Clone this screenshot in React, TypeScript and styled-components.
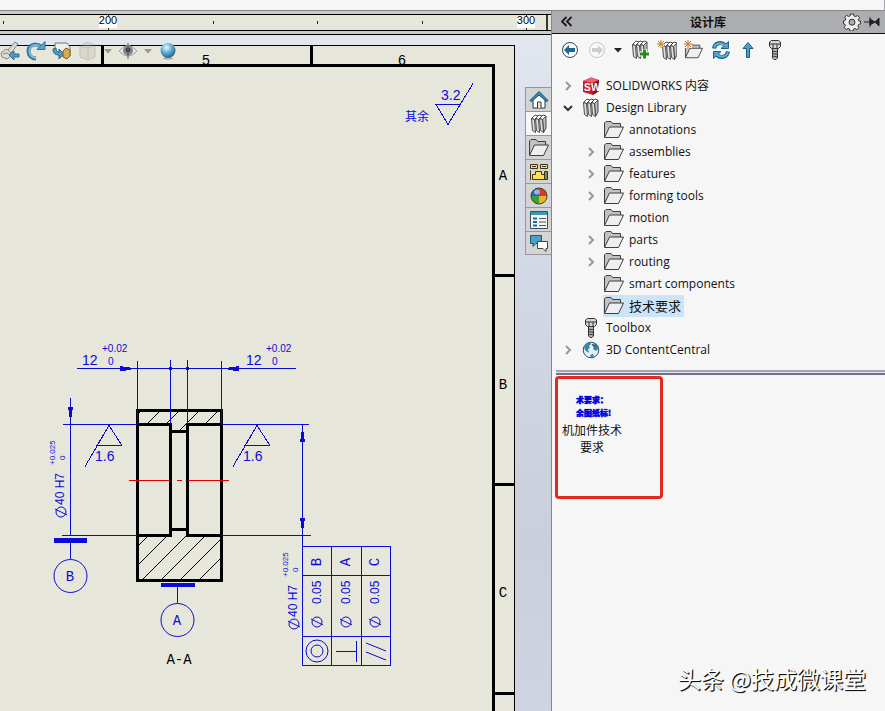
import React from "react";
import styled, { createGlobalStyle } from "styled-components";

const GlobalStyle = createGlobalStyle`
  * { box-sizing: border-box; }
  body {
    margin: 0;
    background: #f6f6f6;
    color: #111;
    font: 12px/22px "Open Sans", "Noto Sans CJK SC", sans-serif;
  }
  button { font: inherit; color: inherit; padding: 0; border: 0; background: none; }
  ul { list-style: none; margin: 0; padding: 0; }
  svg { display: block; flex: none; }
`;

const Window = styled.div`
  position: relative;
  display: flex;
  flex-direction: column;
  min-height: 100vh;
`;
const TopStrip = styled.header`
  height: 10px;
  border-right: 1px solid #a5a5a9;
  background: #f6f6f6;
`;
const Workspace = styled.main`
  flex: 1;
  display: flex;
  border-top: 1px solid #85868a;
`;
const DocumentPane = styled.section`
  flex: 1;
  min-width: 0;
  display: flex;
  flex-direction: column;
  border-right: 1px solid #85868f;
`;
const RulerBar = styled.div`
  background: #c8cacb;
  padding: 3px 0;
  border-bottom: 1px solid #000;
`;
const RulerTrack = styled.div`
  height: 17px;
  overflow: hidden;
  background: #e6e6da;
  border-top: 1px solid #000;
  border-bottom: 1px solid #000;
`;
const Canvas = styled.div`
  position: relative;
  flex: 1;
  display: flex;
  justify-content: space-between;
  background: linear-gradient(#e2e6ef, #d3d9e5 30%, #cbcfdb 75%, #d0d4e2);
`;
const Sheet = styled.div`
  flex: 1;
  min-width: 0;
  overflow: hidden;
  margin: 10px 9px 0 0;
`;
const ViewTools = styled.div`
  position: absolute;
  top: 4px;
  left: -1px;
  display: flex;
  align-items: center;
  gap: 4px;
`;
const ViewTool = styled.button<{ $dim?: boolean }>`
  width: 22px;
  height: 24px;
  display: grid;
  place-items: center;
  opacity: ${(p) => (p.$dim ? 0.3 : 1)};
`;
const ViewMenu = styled(ViewTool)`
  width: 10px;
`;
const TabRail = styled.nav`
  width: 26px;
  padding-top: 52px;
`;
const RailTab = styled.button<{ $active?: boolean }>`
  width: 26px;
  height: 24px;
  display: grid;
  place-items: center;
  border: 1px solid #96979b;
  border-width: 1px 0 0 1px;
  background: ${(p) => (p.$active ? "#f6f6f6" : "#d3d4d4")};
  &:last-child { border-bottom-width: 1px; }
`;
const LibraryPane = styled.aside`
  width: 333px;
  display: flex;
  flex-direction: column;
  background: #f6f6f6;
`;
const PaneHeader = styled.div`
  height: 23px;
  display: flex;
  align-items: center;
  padding: 0 4px 0 6px;
  gap: 2px;
  background: #abadb0;
  border-bottom: 1px solid #101018;
`;
const PaneTitle = styled.h1`
  flex: 1;
  margin: 0;
  padding-right: 3px;
  text-align: center;
  font: bold 12px/20px "Noto Sans CJK SC", sans-serif;
`;
const PaneTools = styled.div`
  height: 32px;
  display: flex;
  align-items: center;
  gap: 4px;
  padding-left: 6px;
`;
const PaneTool = styled.button<{ $narrow?: boolean }>`
  width: ${(p) => (p.$narrow ? 12 : 23)}px;
  height: 24px;
  display: grid;
  place-items: center;
`;
const HeaderTool = styled.button`
  width: 18px;
  height: 20px;
  display: grid;
  place-items: center;
`;
const Tree = styled.ul`
  padding: 9px 0 9px 8px;
`;
const Branch = styled.ul`
  padding-left: 23px;
`;
const TreeRow = styled.div`
  display: flex;
  align-items: center;
  height: 22px;
`;
const Toggle = styled.span`
  width: 20px;
  display: flex;
  padding-left: 3px;
`;
const Node = styled.button<{ $selected?: boolean }>`
  height: 22px;
  display: flex;
  align-items: center;
  gap: 5px;
  padding: 0 3px 0 1px;
  white-space: nowrap;
  font-size: ${(p) => (p.$selected ? 13 : 12)}px;
  background: ${(p) => (p.$selected ? "#cce4f8" : "transparent")};
`;
const Splitter = styled.hr`
  width: 100%;
  height: 5px;
  margin: 0 0 0 4px;
  border: 0;
  border-top: 2px solid #a2a3b5;
  border-bottom: 2px solid #72738a;
  background: #e3e4ec;
`;
const Results = styled.div`
  flex: 1;
  padding: 1px 3px;
`;
const ResultCard = styled.button`
  width: 108px;
  height: 123px;
  display: flex;
  flex-direction: column;
  padding: 14px 36px 0 2px;
  border: 3px solid #e22a20;
  border-radius: 4px;
  text-align: center;
`;
const Preview = styled.span`
  padding-left: 16px;
  color: #0000e0;
  text-align: left;
  white-space: nowrap;
  font: 900 8px/13px "Noto Sans CJK SC", sans-serif;
  text-shadow: 0 0 1px #0000e0;
`;
const ResultName = styled.span`
  padding-top: 2px;
  font: 12px/17px "Noto Sans CJK SC", sans-serif;
`;
const Watermark = styled.div`
  position: absolute;
  right: 19px;
  bottom: 17px;
  color: #fff;
  font: 23px/32px "Noto Sans CJK SC", sans-serif;
  text-shadow: 1px 1px 0 #111, 1px 1px 1px #333;
`;

const Svg = ({ w = 20, h = 20, children }: { w?: number; h?: number; children: React.ReactNode }) => (
  <svg width={w} height={h} viewBox={`0 0 ${w} ${h}`} fill="none" aria-hidden="true">{children}</svg>
);

const Caret = ({ color = "#222" }) => (
  <Svg w={8} h={5}><path d="M0 0h8L4 4.500z" fill={color} /></Svg>
);
const booksPath = (
  <g stroke="#3a3a3a" strokeWidth=".9" strokeLinejoin="round">
    <path d="M13.500 5.500L17 2v12l-2.500 4.500z" fill="#bdbdbd" />
    {[0, 4, 8].map((x) => (
      <g key={x}>
        <path d={`M${x + 2.500} 4.500L${x + 6} 1l3 1-3.500 3.500z`} fill="#fff" />
        <path d={`M${x + 2.500} 4.500l3 1 1 13-3-2z`} fill="#dedede" />
      </g>
    ))}
  </g>
);
const Books = () => <Svg>{booksPath}</Svg>;
const star = <path d="M4 0v8M0 4h8M1 1l6 6M7 1L1 7" stroke="#c87722" />;
const BooksAdd = () => (
  <Svg>{booksPath}<path d="M14.500 9v10M9.500 14h10" stroke="#fff" strokeWidth="5" /><path d="M14.500 9.500v9M10 14h9" stroke="#258b18" strokeWidth="3" /></Svg>
);
const BooksNew = () => <Svg><g transform="translate(3 1)">{booksPath}</g><rect width="7" height="7" fill="#f6f6f6" />{star}</Svg>;
const folderPath = (
  <g stroke="#3f3f42" strokeLinejoin="round">
    <path d="M.500 17V3L2 1.500h5L8.500 3.500h8V7" fill="#c2c2c5" />
    <path d="M.500 17.500L5.500 7h14l-5 10.500z" fill="#efeff1" />
  </g>
);
const Folder = () => <Svg>{folderPath}</Svg>;
const FolderNew = () => <Svg><g transform="translate(1 2) scale(.9)">{folderPath}</g><rect width="8" height="8" fill="#f6f6f6" />{star}</Svg>;
const Bolt = () => (
  <Svg>
    <g stroke="#333" fill="#b8b8ba">
      <path d="M7.500 8h5v10l-1.500 1.500H9L7.500 18z" />
      <path d="M4.500 2l2-1.500h7l2 1.500v4.500l-2 2h-7l-2-2z" fill="#d5d5d7" />
      <path d="M4.500 4h11M8 4v4M12 4v4M7.500 11l5 1M7.500 13.500l5 1M7.500 16l5 1" />
    </g>
  </Svg>
);
const Back = ({ off = false }) => (
  <Svg w={18} h={18}>
    <g transform={off ? "rotate(180 9 9)" : undefined}>
      <circle cx="9" cy="9" r="7.500" fill="#fafafa" stroke={off ? "#c6c6c8" : "#39475b"} />
      <path d="M3 9l5-5v3h6v4H8v3z" fill={off ? "#ccc" : "#176894"} />
    </g>
  </Svg>
);
const refreshHalf = (
  <>
    <path d="M3 8.500C4 2 11 2 14 5" stroke="#1d6488" strokeWidth="4" />
    <path d="M17.500 1.500v7h-7.500z" fill="#4ba2c9" stroke="#1d6488" strokeLinejoin="round" />
    <path d="M3 7.500C5 2.500 11 2.500 14.500 5.500" stroke="#63b2d6" strokeWidth="2" />
  </>
);
const Refresh = () => <Svg>{refreshHalf}<g transform="rotate(180 10 10)">{refreshHalf}</g></Svg>;
const UpArrow = () => <Svg><path d="M10 2.500l5 6h-3.500v9h-3v-9H5z" fill="#4ba2c9" stroke="#175b80" /></Svg>;
const Gear = () => (
  <Svg w={18} h={18}>
    <path d="M7.500 1h3l.5 2 1.500.7L14.500 2.500l2 2.200-1.300 1.800.6 1.500 1.700.2v2.600l-2 .7-.6 1.400 1.100 1.800-2.100 2-1.900-1.200-1.500.6-.5 1.900h-3L6.500 16 5 15.400l-1.800 1.200-2-2.200 1.200-1.800L2 11.200l-1.500-.4V8l1.700-.6.6-1.500-1.200-1.700 2-1.900 1.800 1.100L7 3z" fill="#eee" stroke="#333" />
    <circle cx="9" cy="9.200" r="3" fill="#abadb0" stroke="#333" />
  </Svg>
);
const Pin = () => (
  <Svg w={16} h={14}><path d="M0 7h6" stroke="#222" /><path d="M6 2v10M6 4l5 3 4-4v8l-4-4-5 3z" fill="#222" stroke="#222" /></Svg>
);
const Collapse = () => <Svg w={12} h={12}><path d="M5.500 1L1 5.500 5.500 10M10.500 1L6 5.500l4.500 4.500" stroke="#1b1b1b" strokeWidth="1.800" /></Svg>;
const SolidWorks = () => (
  <Svg>
    <path d="M2 5l8-3.500L18 4v11l-6 4-10-3z" fill="#c61d29" />
    <path d="M2 5l8-3.500L18 4l-6 3z" fill="#e8636a" />
    <path d="M12 7l6-3v11l-6 4z" fill="#8d1019" />
    <g fill="#fff" fontFamily="'Liberation Sans', sans-serif" fontWeight="bold" fontSize="10">
      <text x="3" y="15">S</text>
      <text x="10" y="15">W</text>
    </g>
  </Svg>
);
const Globe = () => (
  <Svg>
    <circle cx="10" cy="10" r="7.800" fill="#e6f1f6" stroke="#394b5b" />
    <path d="M3 8l2-4 4-2 1 2-2 2 1 2-2 1 1 4-3-2zM11 4l4-1 3 5-3 3-3-2 1-2zM9 15l3-1 1 2-3 2z" fill="#3288aa" />
    <path d="M11 4l2 3 3-2" stroke="#1d5572" />
  </Svg>
);
const Home = () => (
  <Svg>
    <path d="M4 9v9h12V9l-6-5z" fill="#fff" stroke="#333" />
    <path d="M8.500 18v-6h3.500v6" fill="#ece7db" stroke="#333" />
    <path d="M1 10.500l9-9 9 9-1.500 1L10 5l-7.500 6.500z" fill="#3391b9" stroke="#1a4b65" />
  </Svg>
);
const Palette = () => (
  <Svg>
    <g stroke="#3c3414" fill="#ffdf54">
      <path d="M1.500 2.500h7v4h-7zM11.500 2.500h7v4h-7z" />
      <path d="M6.500 9.500h6v3h3v5h-12v-5h3z" />
      <path d="M1.500 8.500v9.500" fill="none" /><path d="M15.500 9.500h3v8h-3z" fill="#7c8d55" />
    </g>
    <path d="M3 4.500h4M13 4.500h4" stroke="#3c3414" />
  </Svg>
);
const Appearance = () => (
  <Svg>
    <path d="M10 10V2a8 8 0 0 0-8 8z" fill="#2e65ba" /><path d="M10 10h8a8 8 0 0 0-8-8z" fill="#db372b" />
    <path d="M10 10v8a8 8 0 0 0 8-8z" fill="#edb421" /><path d="M10 10H2a8 8 0 0 0 8 8z" fill="#3d9e3b" />
    <ellipse cx="8" cy="6" rx="3" ry="2.500" fill="#fff" opacity=".5" />
    <circle cx="10" cy="10" r="8" stroke="#49422d" />
  </Svg>
);
const Properties = () => (
  <Svg>
    <path d="M1.500 1.500h17v17h-17z" fill="#f5f5f5" stroke="#345264" /><path d="M2 2h16v3H2z" fill="#4294bd" />
    <path d="M4 8.500h4M4 12h4M4 15.500h4" stroke="#216b94" strokeWidth="2" /><path d="M10 8.500h7M10 12h7M10 15.500h7" stroke="#4e5357" />
  </Svg>
);
const Forum = () => (
  <Svg>
    <path d="M1.500 2.500h11v8H7l-3 3v-3H1.500z" fill="#4c9fc7" stroke="#1a5475" />
    <path d="M8.500 8.500h10v7H17v3l-3-3H8.500z" fill="#fff" stroke="#444" />
  </Svg>
);
const SectionView = () => (
  <Svg>
    <path d="M1 12l5-4 2 1 7-8 3 2-7 9v3l-4 3-5-2z" fill="#dddcd3" stroke="#88877e" />
    <path d="M3 13l4-1 3 2M8 9l3 3" stroke="#89877c" />
    <path d="M9 14l5-4v3h5v3h-5v3z" fill="#4e9dc5" stroke="#2d6f93" />
  </Svg>
);
const Rotate = () => (
  <Svg><path d="M10 17.500C0 17 0 3 10 3.500c2 0 3 .8 4.500 2" stroke="#2f759b" strokeWidth="4" /><path d="M10 17C1 16 1 4 10 4c2 0 3 .8 4.500 2" stroke="#83b9d5" strokeWidth="2" /><path d="M11 8.500h8v-8z" fill="#5ca6ce" stroke="#2f759b" /></Svg>
);
const SheetView = () => (
  <Svg>
    <path d="M3 9V2h12l3 4v9" fill="#f0f0ea" stroke="#77766f" />
    <path d="M1 8c0 5 3 6 6 6v4l5-5-5-5v3c-2 0-3-1-3-4z" fill="#4e9bc1" stroke="#2e6889" />
    <path d="M11 10l3-3 4 2v6l-3 3-4-2z" fill="#d9aa4c" stroke="#805e20" />
  </Svg>
);
const Cube = () => <Svg><path d="M2 5l7-4 8 3v12l-7 3-8-3z" fill="#bbb" stroke="#777" /><path d="M2 5l8 2 7-3M10 7v12" stroke="#777" /></Svg>;
const Eye = () => (
  <Svg>
    <path d="M1 10q9-11 18 0-9 10-18 0z" fill="#e6e6e3" stroke="#a09f98" />
    <circle cx="10" cy="9.500" r="5" fill="#8a8a8e" /><circle cx="10" cy="9" r="2.500" fill="#444" />
    <path d="M10 2v16" stroke="#555" />
  </Svg>
);
const Ball = () => (
  <Svg>
    <defs><radialGradient id="ball" cx=".4" cy=".3" r=".7"><stop stopColor="#eaf8ff" /><stop offset=".5" stopColor="#63b0d5" /><stop offset="1" stopColor="#226488" /></radialGradient></defs>
    <ellipse cx="10" cy="17.500" rx="5" ry="1" fill="#aaa" /><circle cx="10" cy="9.500" r="7.500" fill="url(#ball)" />
  </Svg>
);
const Chevron = ({ open = false }) =>
  open ? (
    <Svg w={10} h={10}><path d="M1 3l4 4 4-4" stroke="#333" strokeWidth="2" /></Svg>
  ) : (
    <Svg w={10} h={10}><path d="M3 1l4 4-4 4" stroke="#999" strokeWidth="2" /></Svg>
  );

const blue = "#0b0bd8";

const Label = ({ x, y, size = 14, up = false, color = blue, children }: {
  x: number; y: number; size?: number; up?: boolean; color?: string; children: string;
}) => (
  <text x={x} y={y} fontSize={size} fill={color} fontFamily="'Liberation Sans', sans-serif"
    transform={up ? `rotate(-90 ${x} ${y})` : undefined}>{children}</text>
);

const Mark = ({ x, y, up = false, color = "#000", children }: {
  x: number; y: number; up?: boolean; color?: string; children: string;
}) => (
  <text x={x} y={y} fontSize="14" fill={color} textAnchor="middle" fontFamily="'Liberation Mono', monospace"
    transform={up ? `rotate(-90 ${x} ${y})` : undefined}>{children}</text>
);

const Diameter = ({ x, y }: { x: number; y: number }) => (
  <g stroke={blue} fill="none" shapeRendering="auto"><circle cx={x} cy={y} r="5" /><path d={`M${x - 6} ${y - 3}l12 6`} /></g>
);

const Roughness = ({ x }: { x: number }) => (
  <>
    <path d={`M${x + 13} 445.500h-25l12-20 13 20M${x} 425.500l-24 41`} stroke={blue} fill="none" />
    <Label x={x - 14} y={461}>1.6</Label>
  </>
);

const tolerances = [
  { x: 321, datum: "B" },
  { x: 350, datum: "A" },
  { x: 379, datum: "C" },
];

const Drawing = () => (
  <svg width="515" height="666" viewBox="0 45 515 666" shapeRendering="crispEdges" role="img" aria-label="A-A">
    <path d="M0 45h515v666H0z" fill="#e6e6da" />
    <path d="M0 45.500h514.500V711" stroke="#000" fill="none" />
    <Mark x={206} y={65}>5</Mark>
    <Mark x={402} y={65}>6</Mark>
    <path d="M0 65.500h493.500V711M102.500 45v20M311.500 45v20M494 275.500h20M494 484.500h20M494 693.500h20" stroke="#000" strokeWidth="3" fill="none" />
    <Mark x={503} y={180}>A</Mark>
    <Mark x={503} y={389}>B</Mark>
    <Mark x={503} y={597}>C</Mark>

    <text x="405" y="121" fontSize="12" fill={blue} fontFamily="'Noto Sans CJK SC', sans-serif">其余</text>
    <path d="M460 104.500h-24l12 20 25-41" stroke={blue} fill="none" />
    <Label x={441} y={100}>3.2</Label>

    <defs>
      <clipPath id="web">
        <path d="M138 536h33v-5h16v5h34v43h-83zM138 411h83v12h-34v8h-16v-8h-33z" />
      </clipPath>
    </defs>
    <g clipPath="url(#web)" stroke="#000">
      {[684, 703, 722, 741, 760, 779].map((c) => <path key={c} d={`M${c - 580} 580L${c - 525} 525`} />)}
      {[552, 571, 590, 610, 629].map((c) => <path key={c} d={`M${c - 433} 433L${c - 409} 409`} />)}
    </g>
    <path d="M137.500 410.500h84v170h-84zM137 424.500h33.500v111H137M222 424.500h-34.500v111H222M170 431.500h17M170 529.500h17" stroke="#000" strokeWidth="3" fill="none" />
    <path d="M129 480.500h41M177 480.500h5M188 480.500h41" stroke="#e00000" />

    <g stroke={blue} fill="none">
      <path d="M77 368.500h219M137.500 361v63M170.500 360v64M187.500 360v64M221.500 361v63" />
      <path d="M70.500 398v137M63 424.500h74M222 424.500h87M62 535.500h75M222 535.500h89M302.500 424v122" />
      <path d="M302.500 546.500h88v119h-88zM331.500 546v120M361.500 546v120M302 575.500h88M302 636.500h88" />
      <path d="M70.500 543v16M177.500 587v16" />
    </g>
    <g fill={blue}>
      <path d="M120 366l17 2.500-17 3zM239 366l-17 2.500 17 3zM68 407h5l-2.500 17zM300 442h5l-2.500-17zM300 518h5l-2.500 17z" />
      <path d="M54 538h33v5H54zM161 583h34v4h-34z" />
      <circle cx="170.500" cy="368.500" r="2" /><circle cx="187.500" cy="368.500" r="2" />
    </g>
    <g stroke={blue} fill="none" shapeRendering="auto">
      <circle cx="70.500" cy="576" r="16.500" /><circle cx="177.500" cy="620" r="16.500" />
      <circle cx="317" cy="651" r="11" /><circle cx="317" cy="651" r="6" />
      <path d="M336 651.500h20M356.500 641v21M366 643l20 8M366 652l20 8" />
    </g>
    <Mark x={70} y={581} color={blue}>B</Mark>
    <Mark x={177} y={625} color={blue}>A</Mark>
    <Mark x={179} y={664}>A-A</Mark>

    {[82, 246].map((x) => (
      <React.Fragment key={x}>
        <Label x={x} y={365}>12</Label>
        <Label x={x + 20} y={352} size={10}>+0.02</Label>
        <Label x={x + 26} y={365} size={10}>0</Label>
      </React.Fragment>
    ))}
    <Roughness x={109} />
    <Roughness x={257} />

    {[{ x: 64, y: 505 }, { x: 297, y: 617 }].map(({ x, y }) => (
      <React.Fragment key={x}>
        <Diameter x={x - 3} y={y + 7} />
        <Label x={x} y={y} size={12} up>40 H7</Label>
        <Label x={x - 9} y={y - 40} size={8} up>+0.025</Label>
        <Label x={x + 1} y={y - 45} size={8} up>0</Label>
      </React.Fragment>
    ))}
    {tolerances.map(({ x, datum }) => (
      <React.Fragment key={datum}>
        <Diameter x={x - 4} y={622} />
        <Label x={x} y={604} size={12} up>0.05</Label>
        <Mark x={x} y={562} color={blue} up>{datum}</Mark>
      </React.Fragment>
    ))}
  </svg>
);

const Ruler = () => (
  <svg width="551" height="15" viewBox="0 0 551 15" shapeRendering="crispEdges" aria-hidden="true">
    <path d="M3.500 6v3M213.500 6v3M317.500 6v3M422.500 6v3M108.500 0v15M526.500 0v15" stroke="#222" />
    <path d="M99 1h18v12H99zM517 1h18v12h-18z" fill="#fff" />
    <path d="M546.500 0v15" stroke="#39372e" strokeWidth="2" />
    <g fontSize="11" fontFamily="'Liberation Sans', sans-serif" textAnchor="middle" fill="#000">
      <text x="108" y="9">200</text>
      <text x="526" y="9">300</text>
    </g>
  </svg>
);

const railTabs = [
  { name: "Home", icon: <Home /> },
  { name: "Design Library", icon: <Books />, active: true },
  { name: "File Explorer", icon: <Folder /> },
  { name: "View Palette", icon: <Palette /> },
  { name: "Appearances", icon: <Appearance /> },
  { name: "Properties", icon: <Properties /> },
  { name: "Forum", icon: <Forum /> },
];

const paneTools = [
  { name: "Back", icon: <Back /> },
  { name: "Forward", icon: <Back off /> },
  { name: "History", icon: <Caret />, narrow: true },
  { name: "Add to library", icon: <BooksAdd /> },
  { name: "Add location", icon: <BooksNew /> },
  { name: "New folder", icon: <FolderNew /> },
  { name: "Refresh", icon: <Refresh /> },
  { name: "Up", icon: <UpArrow /> },
  { name: "Toolbox", icon: <Bolt /> },
];

const folders = [
  { name: "annotations" },
  { name: "assemblies", more: true },
  { name: "features", more: true },
  { name: "forming tools", more: true },
  { name: "motion" },
  { name: "parts", more: true },
  { name: "routing", more: true },
  { name: "smart components" },
  { name: "技术要求", selected: true },
];

const Item = ({ name, icon, toggle, selected, children }: {
  name: string; icon: React.ReactNode; toggle?: React.ReactNode; selected?: boolean; children?: React.ReactNode;
}) => (
  <li>
    <TreeRow>
      <Toggle>{toggle}</Toggle>
      <Node $selected={selected}>{icon}{name}</Node>
    </TreeRow>
    {children}
  </li>
);

export default function App() {
  return (
    <Window>
      <GlobalStyle />
      <TopStrip />
      <Workspace>
        <DocumentPane>
          <RulerBar><RulerTrack><Ruler /></RulerTrack></RulerBar>
          <Canvas>
            <Sheet><Drawing /></Sheet>
            <TabRail>
              {railTabs.map((t) => <RailTab key={t.name} aria-label={t.name} $active={t.active}>{t.icon}</RailTab>)}
            </TabRail>
            <ViewTools>
              <ViewTool aria-label="Previous view"><SectionView /></ViewTool>
              <ViewTool aria-label="Rotate"><Rotate /></ViewTool>
              <ViewTool aria-label="Sheet view"><SheetView /></ViewTool>
              <ViewTool aria-label="Display style" $dim><Cube /></ViewTool>
              <ViewMenu aria-label="Display style menu"><Caret color="#999" /></ViewMenu>
              <ViewTool aria-label="Hide or show"><Eye /></ViewTool>
              <ViewMenu aria-label="Hide or show menu"><Caret color="#999" /></ViewMenu>
              <ViewTool aria-label="Scene"><Ball /></ViewTool>
            </ViewTools>
          </Canvas>
        </DocumentPane>
        <LibraryPane>
          <PaneHeader>
            <HeaderTool aria-label="Collapse"><Collapse /></HeaderTool>
            <PaneTitle>设计库</PaneTitle>
            <HeaderTool aria-label="Options"><Gear /></HeaderTool>
            <HeaderTool aria-label="Pin"><Pin /></HeaderTool>
          </PaneHeader>
          <PaneTools>
            {paneTools.map((t) => <PaneTool key={t.name} aria-label={t.name} $narrow={t.narrow}>{t.icon}</PaneTool>)}
          </PaneTools>
          <Tree>
            <Item name="SOLIDWORKS 内容" icon={<SolidWorks />} toggle={<Chevron />} />
            <Item name="Design Library" icon={<Books />} toggle={<Chevron open />}>
              <Branch>
                {folders.map((f) => (
                  <Item key={f.name} name={f.name} icon={<Folder />} selected={f.selected} toggle={f.more && <Chevron />} />
                ))}
              </Branch>
            </Item>
            <Item name="Toolbox" icon={<Bolt />} />
            <Item name="3D ContentCentral" icon={<Globe />} toggle={<Chevron />} />
          </Tree>
          <Splitter />
          <Results>
            <ResultCard>
              <Preview>术要求：</Preview>
              <Preview>余图纸标!</Preview>
              <ResultName>机加件技术要求</ResultName>
            </ResultCard>
          </Results>
        </LibraryPane>
      </Workspace>
      <Watermark>头条 @技成微课堂</Watermark>
    </Window>
  );
}
